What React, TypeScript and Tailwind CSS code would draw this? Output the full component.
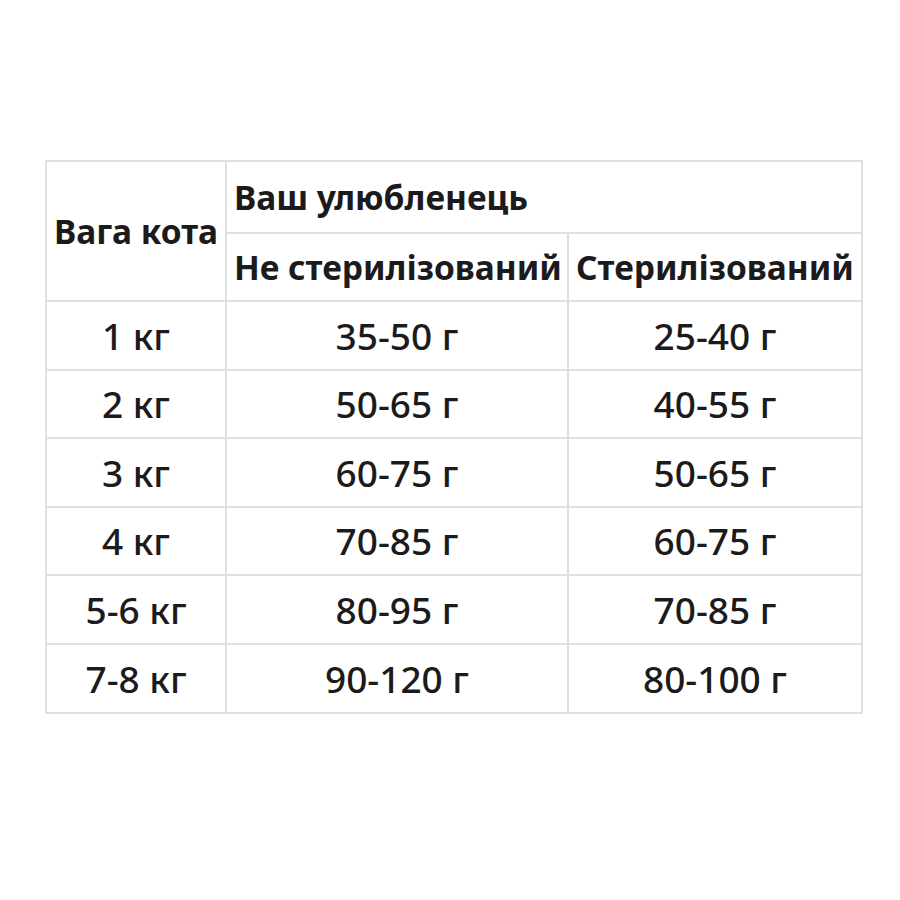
const rows = [
  ["1 кг", "35-50 г", "25-40 г"],
  ["2 кг", "50-65 г", "40-55 г"],
  ["3 кг", "60-75 г", "50-65 г"],
  ["4 кг", "70-85 г", "60-75 г"],
  ["5-6 кг", "80-95 г", "70-85 г"],
  ["7-8 кг", "90-120 г", "80-100 г"],
];

const cell = "border-2 border-[#e0e0e0]";
const head = `${cell} text-left font-bold text-[33.5px] pl-[7px] whitespace-nowrap`;

export default function App() {
  return (
    <div className="w-[900px] h-[900px] bg-white pt-[160px] pl-[45px] font-['Noto_Sans',sans-serif] text-[#1c1a1a]">
      <table className="border-collapse w-[816px] table-fixed">
        <colgroup>
          <col className="w-[180px]" />
          <col className="w-[342px]" />
          <col className="w-[294px]" />
        </colgroup>
        <thead>
          <tr className="h-[72px]">
            <th rowSpan={2} className={head}>
              Вага кота
            </th>
            <th colSpan={2} className={head}>
              Ваш улюбленець
            </th>
          </tr>
          <tr className="h-[68px]">
            <th className={head}>Не стерилізований</th>
            <th className={head}>Стерилізований</th>
          </tr>
        </thead>
        <tbody>
          {rows.map((r) => (
            <tr key={r[0]} className="h-[68.6px]">
              {r.map((v, i) => (
                <td key={i} className={`${cell} text-center font-medium text-[37px]`}>
                  {v}
                </td>
              ))}
            </tr>
          ))}
        </tbody>
      </table>
    </div>
  );
}
